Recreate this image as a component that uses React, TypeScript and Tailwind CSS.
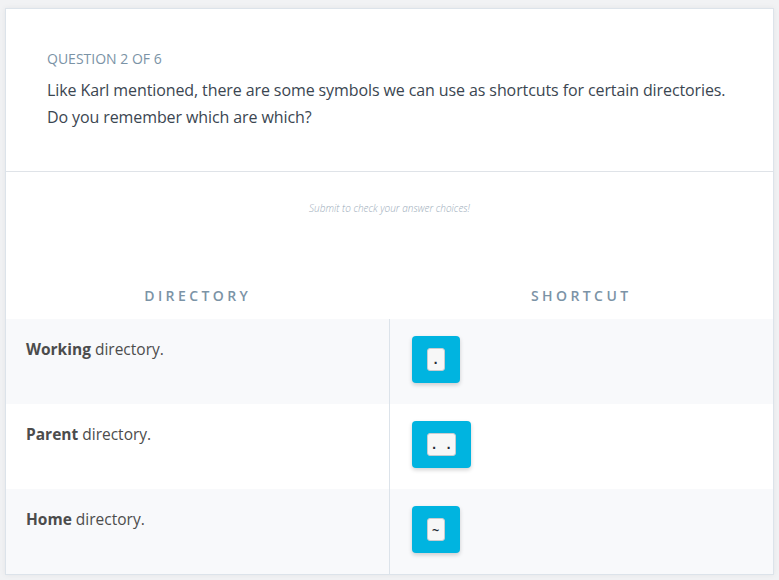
import React from 'react'

const rows = [
  { name: 'Working', key: '.' },
  { name: 'Parent', key: '. .' },
  { name: 'Home', key: '~' },
]

function KeyChip({ value }: { value: string }) {
  return (
    <div className="inline-flex rounded-[4px] bg-[#00b4e0] px-[15px] py-[12px] shadow-[0_2px_4px_rgba(0,0,0,0.18)]">
      <span className="flex h-[23px] min-w-[18px] items-center justify-center rounded-[3px] border border-[#c8ccd0] bg-[#f7f7f7] px-[3px] font-['DejaVu_Sans_Mono',monospace] text-[12px] font-bold leading-none text-[#1f2a36]">
        {value}
      </span>
    </div>
  )
}

export default function App() {
  return (
    <div className="min-h-[580px] w-[779px] bg-[#f1f2f4] px-[5px] pt-[8px] font-['Open_Sans',sans-serif]">
      <div className="w-[769px] border border-[#dce3ea] bg-white shadow-[0_0_6px_rgba(0,0,0,0.06)]">
        {/* question header */}
        <div className="border-b border-[#dfe3e8] pt-[41px] pr-[12px] pb-[40px] pl-[41px]">
          <div className="text-[14px] uppercase leading-[18px] text-[#7b93a6]">Question 2 of 6</div>
          <p className="mt-[9px] text-[16px] leading-[27px] tracking-[-0.1px] text-[#3b4651]">
            Like Karl mentioned, there are some symbols we can use as shortcuts for certain directories.
            <br />
            Do you remember which are which?
          </p>
        </div>

        <p className="pt-[29px] text-center text-[10px] font-light italic leading-[14px] text-[#9aabb9]">
          Submit to check your answer choices!
        </p>

        {/* matching table */}
        <div className="mt-[72px] grid grid-cols-2">
          <div className="pb-[14px] text-center text-[14px] font-semibold uppercase leading-[18px] tracking-[3.4px] text-[#7b93a6]">
            Directory
          </div>
          <div className="pb-[14px] text-center text-[14px] font-semibold uppercase leading-[18px] tracking-[3.4px] text-[#7b93a6]">
            Shortcut
          </div>
          {rows.map((r, i) => (
            <React.Fragment key={r.name}>
              <div
                className={`h-[85px] border-r border-[#dce3ea] px-[20px] pt-[20px] text-[15.5px] leading-[20px] text-[#4c4c4c] ${
                  i % 2 === 0 ? 'bg-[#f8f9fb]' : 'bg-white'
                }`}
              >
                <span className="font-bold">{r.name}</span> directory.
              </div>
              <div className={`h-[85px] pl-[22px] pt-[17px] ${i % 2 === 0 ? 'bg-[#f8f9fb]' : 'bg-white'}`}>
                <KeyChip value={r.key} />
              </div>
            </React.Fragment>
          ))}
        </div>
      </div>
    </div>
  )
}
